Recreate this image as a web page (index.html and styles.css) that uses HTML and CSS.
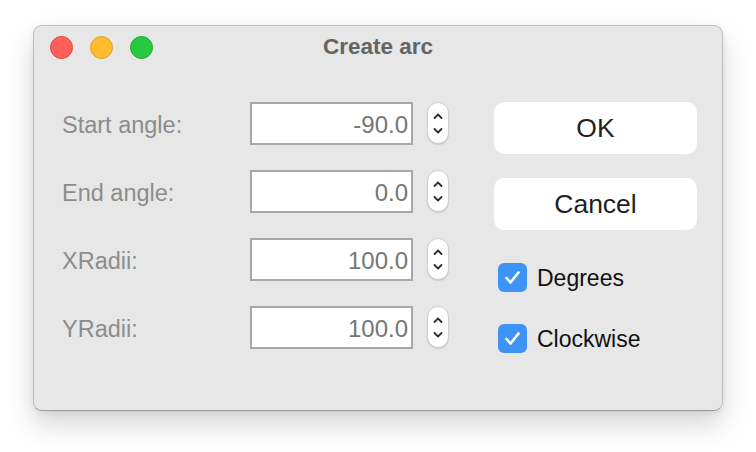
FILE: index.html
```html
<!DOCTYPE html>
<html>
<head>
<meta charset="utf-8">
<link rel="stylesheet" href="styles.css">
</head>
<body>
<div class="window">
  <div class="titlebar">
    <div class="lights">
      <span class="light red"></span>
      <span class="light yellow"></span>
      <span class="light green"></span>
    </div>
    <div class="title">Create arc</div>
    <div></div>
  </div>
  <div class="content">
    <div class="form">
      <div class="label">Start angle:</div>
      <div class="field">-90.0</div>
      <div class="stepper"><svg width="22" height="42" viewBox="0 0 22 42"><path d="M7.5 16 L11 12.5 L14.5 16" /><path d="M7.5 27 L11 30.5 L14.5 27" /></svg></div>

      <div class="label">End angle:</div>
      <div class="field">0.0</div>
      <div class="stepper"><svg width="22" height="42" viewBox="0 0 22 42"><path d="M7.5 16 L11 12.5 L14.5 16" /><path d="M7.5 27 L11 30.5 L14.5 27" /></svg></div>

      <div class="label">XRadii:</div>
      <div class="field">100.0</div>
      <div class="stepper"><svg width="22" height="42" viewBox="0 0 22 42"><path d="M7.5 16 L11 12.5 L14.5 16" /><path d="M7.5 27 L11 30.5 L14.5 27" /></svg></div>

      <div class="label">YRadii:</div>
      <div class="field">100.0</div>
      <div class="stepper"><svg width="22" height="42" viewBox="0 0 22 42"><path d="M7.5 16 L11 12.5 L14.5 16" /><path d="M7.5 27 L11 30.5 L14.5 27" /></svg></div>
    </div>
    <div class="side">
      <div class="button">OK</div>
      <div class="button cancel">Cancel</div>
      <div class="check first"><span class="box"><svg width="29" height="29" viewBox="0 0 29 29"><path d="M8.5 15 L12.5 19.5 L20.5 9.5" /></svg></span><span class="check-label">Degrees</span></div>
      <div class="check second"><span class="box"><svg width="29" height="29" viewBox="0 0 29 29"><path d="M8.5 15 L12.5 19.5 L20.5 9.5" /></svg></span><span class="check-label">Clockwise</span></div>
    </div>
  </div>
</div>
</body>
</html>
```

FILE: styles.css
```css
html, body {
  margin: 0;
  padding: 0;
  background: #ffffff;
}
html {
  height: 100%;
}
body {
  box-sizing: border-box;
  min-height: 100%;
  font-family: "Liberation Sans", Arial, sans-serif;
  padding: 25px 0 0 33px;
}
.window {
  box-sizing: border-box;
  width: 690px;
  height: 386px;
  background: #e7e7e7;
  border: 1px solid #bdbdbd;
  border-bottom-color: #9a9a9a;
  border-radius: 9px;
  box-shadow: 0 14px 28px rgba(0, 0, 0, 0.16), 0 2px 6px rgba(0, 0, 0, 0.08);
}
.titlebar {
  height: 42px;
  display: grid;
  grid-template-columns: 1fr auto 1fr;
  align-items: center;
}
.lights {
  display: flex;
  gap: 17px;
  padding-left: 16px;
}
.light {
  width: 23px;
  height: 23px;
  border-radius: 50%;
  box-sizing: border-box;
}
.red { background: #fe5f57; border: 1px solid #e0443e; }
.yellow { background: #febc2e; border: 1px solid #dea123; }
.green { background: #28c840; border: 1px solid #1aab29; }
.title {
  font-size: 22.5px;
  font-weight: bold;
  color: #646464;
}
.content {
  display: flex;
  padding: 34px 0 0 28px;
}
.form {
  display: grid;
  grid-template-columns: 174px 163px 22px;
  grid-auto-rows: 43px;
  column-gap: 14px;
  row-gap: 25px;
  align-items: center;
}
.label {
  font-size: 23.5px;
  color: #8c8c8c;
  padding-top: 3px;
}
.field {
  box-sizing: border-box;
  height: 43px;
  background: #ffffff;
  border: 2px solid #a8a8a8;
  font-size: 24px;
  color: #767676;
  text-align: right;
  padding: 1px 3px 0 0;
  line-height: 40px;
}
.stepper {
  box-sizing: border-box;
  width: 22px;
  height: 42px;
  background: #ffffff;
  border-radius: 11px;
  border: 1px solid #cfcfcf;
  box-shadow: 0 1px 1px rgba(0, 0, 0, 0.12);
  align-self: start;
  display: flex;
  align-items: center;
  justify-content: center;
}
.stepper svg {
  display: block;
  margin: -1px;
}
.stepper path {
  fill: none;
  stroke: #2e2e2e;
  stroke-width: 1.8;
  stroke-linecap: round;
  stroke-linejoin: round;
}
.side {
  display: flex;
  flex-direction: column;
  margin-left: 45px;
}
.button {
  box-sizing: border-box;
  width: 203px;
  height: 52px;
  background: #ffffff;
  border-radius: 10px;
  font-size: 26.5px;
  color: #1f1f1f;
  display: flex;
  align-items: center;
  justify-content: center;
}
.cancel {
  margin-top: 24px;
}
.check {
  display: flex;
  align-items: center;
  margin-left: 4px;
  gap: 10px;
}
.check.first { margin-top: 32px; }
.check.second { margin-top: 31px; }
.box {
  width: 29px;
  height: 29px;
  border-radius: 6px;
  background: #3d94f6;
  display: block;
}
.box svg { display: block; }
.box path {
  fill: none;
  stroke: #ffffff;
  stroke-width: 2.6;
  stroke-linecap: round;
  stroke-linejoin: round;
}
.check-label {
  font-size: 23px;
  color: #111111;
  padding-top: 3px;
}
```
